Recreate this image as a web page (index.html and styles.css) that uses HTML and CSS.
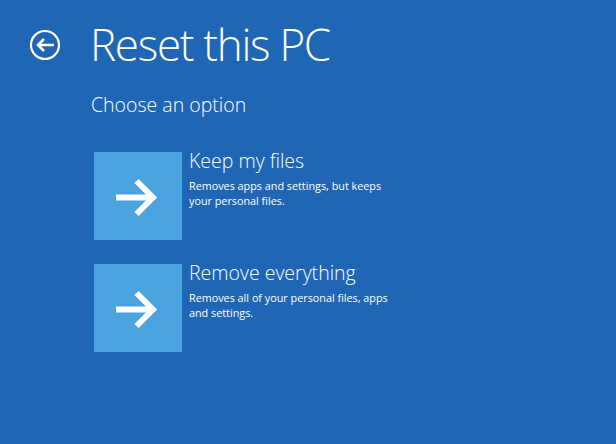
FILE: index.html
```html
<!DOCTYPE html>
<html>
<head>
<meta charset="utf-8">
<link rel="stylesheet" href="styles.css">
</head>
<body>
<div class="page">
  <header class="header">
    <svg class="back" width="32" height="32" viewBox="0 0 32 32">
      <circle cx="16" cy="16" r="14" fill="none" stroke="#fff" stroke-width="2.2"/>
      <path d="M25 16H9M15 10L9 16l6 6" fill="none" stroke="#fff" stroke-width="2.6"/>
    </svg>
    <h1 class="title">Reset this PC</h1>
  </header>
  <h2 class="subtitle">Choose an option</h2>
  <div class="options">
    <div class="option">
      <div class="tile">
        <svg width="88" height="88" viewBox="0 0 88 88">
          <path d="M22 45.5H60M42.5 29L59 45.5 42.5 62" fill="none" stroke="#fff" stroke-width="6"/>
        </svg>
      </div>
      <div class="text">
        <div class="name">Keep my files</div>
        <div class="desc">Removes apps and settings, but keeps<br>your personal files.</div>
      </div>
    </div>
    <div class="option">
      <div class="tile">
        <svg width="88" height="88" viewBox="0 0 88 88">
          <path d="M22 45.5H60M42.5 29L59 45.5 42.5 62" fill="none" stroke="#fff" stroke-width="6"/>
        </svg>
      </div>
      <div class="text">
        <div class="name">Remove everything</div>
        <div class="desc">Removes all of your personal files, apps<br>and settings.</div>
      </div>
    </div>
  </div>
</div>
</body>
</html>
```
FILE: styles.css
```css
html, body {
  margin: 0;
  padding: 0;
  height: 100%;
  background: #1f66b4;
  color: #fff;
  font-family: "Open Sans", "Noto Sans", sans-serif;
}
.page {
  padding: 14px 0 0 29px;
}
.header {
  display: flex;
  align-items: center;
  gap: 29px;
}
.back {
  display: block;
  margin-top: 2px;
}
.title {
  margin: 0;
  font-weight: 300;
  font-size: 44px;
  line-height: 60px;
  letter-spacing: -1.3px;
}
.subtitle {
  margin: 18px 0 0 62px;
  font-weight: 300;
  font-size: 19.5px;
  line-height: 26px;
}
.options {
  margin: 34px 0 0 65px;
  display: flex;
  flex-direction: column;
  gap: 24px;
}
.option {
  display: flex;
  gap: 7px;
}
.tile {
  width: 88px;
  height: 88px;
  background: #4aa3df;
}
.tile svg {
  display: block;
}
.name {
  font-weight: 300;
  font-size: 19.5px;
  line-height: 24px;
  margin-top: -3px;
}
.desc {
  font-size: 10.8px;
  line-height: 15px;
  margin-top: 5px;
}
```
